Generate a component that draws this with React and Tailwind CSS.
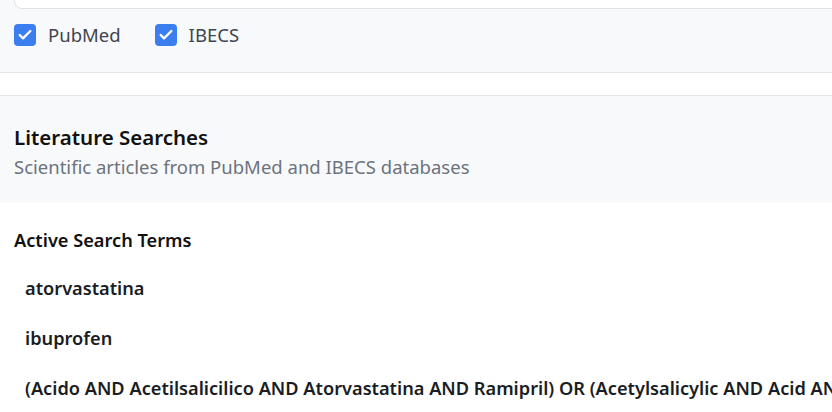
import { Check } from 'lucide-react';

const terms = [
  'atorvastatina',
  'ibuprofen',
  '(Acido AND Acetilsalicilico AND Atorvastatina AND Ramipril) OR (Acetylsalicylic AND Acid AND Atorvastatin AND Ramipril)',
];

function SourceCheckbox({ label }) {
  return (
    <label className="flex items-center gap-[12px]">
      <span className="w-[22px] h-[22px] rounded-[4px] bg-[#3b7ef0] flex items-center justify-center">
        <Check className="w-[16px] h-[16px] text-white" strokeWidth={3.5} />
      </span>
      <span className="text-[18.5px] text-[#3f4551]">{label}</span>
    </label>
  );
}

export default function App() {
  return (
    <div className="w-[832px] h-[412px] overflow-hidden bg-white" style={{ fontFamily: '"Noto Sans", "Open Sans", sans-serif' }}>
      <div className="w-[1100px]">
        <div className="flex flex-col bg-[#f8f9fa] border-b border-[#e4e6ea] pl-[14px] h-[73px]">
          <div className="-mt-[31px] h-[40px] shrink-0 bg-white border border-[#dfe2e6] rounded-[8px]" />
          <div className="flex items-center gap-[34px] mt-[12px]">
            <SourceCheckbox label="PubMed" />
            <SourceCheckbox label="IBECS" />
          </div>
        </div>

        <div className="mt-[22px] bg-[#f8f9fa] border-t border-[#e4e6ea] h-[108px] px-[14px] pt-[27px]">
          <h2 className="text-[20.5px] font-semibold text-[#111] leading-[28px]">Literature Searches</h2>
          <p className="text-[18.5px] text-[#6c737e] leading-[24px] mt-[4px]">Scientific articles from PubMed and IBECS databases</p>
        </div>

        <div className="px-[14px] pt-[25px]">
          <h3 className="text-[18.2px] font-semibold text-[#111] leading-[24px]">Active Search Terms</h3>
          <div className="mt-[12px] flex flex-col">
            {terms.map(term => (
              <div key={term} className="h-[50px] px-[11px] flex items-center whitespace-nowrap">
                <span className="text-[18.2px] font-semibold text-[#1a1d23]">{term}</span>
              </div>
            ))}
          </div>
        </div>
      </div>
    </div>
  );
}
